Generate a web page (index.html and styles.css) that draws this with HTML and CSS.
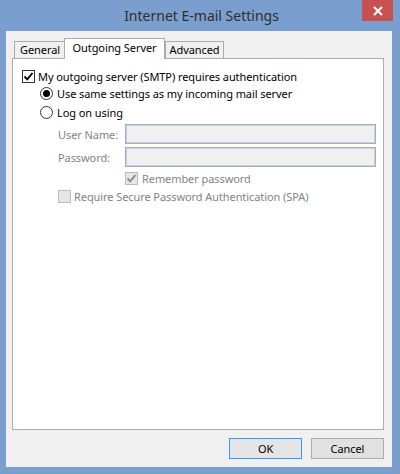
FILE: index.html
```html
<!DOCTYPE html>
<html>
<head>
<meta charset="utf-8">
<link rel="stylesheet" href="styles.css">
</head>
<body>
<div class="window">
  <div class="titlebar">
    <div class="title">Internet E-mail Settings</div>
    <div class="close">
      <svg width="10" height="10" viewBox="0 0 10 10"><path d="M1 1 L9 9 M9 1 L1 9" stroke="#fff" stroke-width="2" fill="none"/></svg>
    </div>
  </div>
  <div class="client">
    <div class="tabs">
      <div class="tab tab-general">General</div>
      <div class="tab tab-selected">Outgoing Server</div>
      <div class="tab tab-advanced">Advanced</div>
    </div>
    <div class="panel">
      <div class="row row-auth">
        <span class="cb"><svg width="11" height="11" viewBox="0 0 11 11"><path d="M1.5 5.5 L4.2 8.3 L9.5 2" stroke="#000" stroke-width="1.9" fill="none"/></svg></span>
        <span class="label">My outgoing server (SMTP) requires authentication</span>
      </div>
      <div class="row row-same">
        <span class="radio radio-on"><span class="dot"></span></span>
        <span class="label">Use same settings as my incoming mail server</span>
      </div>
      <div class="row row-logon">
        <span class="radio"></span>
        <span class="label">Log on using</span>
      </div>
      <div class="field field-user">
        <span class="field-label">User Name:</span>
        <span class="input"></span>
      </div>
      <div class="field field-pass">
        <span class="field-label">Password:</span>
        <span class="input"></span>
      </div>
      <div class="row row-remember">
        <span class="cb cb-disabled"><svg width="11" height="11" viewBox="0 0 11 11"><path d="M1.5 5.5 L4.2 8.3 L9.5 2" stroke="#8a8a8a" stroke-width="1.9" fill="none"/></svg></span>
        <span class="label label-disabled">Remember password</span>
      </div>
      <div class="row row-spa">
        <span class="cb cb-disabled"></span>
        <span class="label label-disabled">Require Secure Password Authentication (SPA)</span>
      </div>
    </div>
    <div class="buttons">
      <button class="btn btn-default">OK</button>
      <button class="btn">Cancel</button>
    </div>
  </div>
</div>
</body>
</html>
```
FILE: styles.css
```css
* { box-sizing: border-box; }
html, body {
  margin: 0;
  padding: 0;
}
body {
  width: 400px;
  height: 474px;
  background: #7a9fcf;
  font-family: "Noto Sans", "Open Sans", sans-serif;
  font-size: 11px;
  letter-spacing: -0.08px;
  color: #000;
  overflow: hidden;
}
.window {
  width: 400px;
  height: 474px;
  display: flex;
  flex-direction: column;
}
.titlebar {
  position: relative;
  height: 31px;
  display: flex;
  align-items: center;
  justify-content: center;
}
.title {
  font-size: 14px;
  letter-spacing: 0;
  color: #2e2e2e;
  margin-top: -1px;
  padding-left: 3px;
}
.close {
  position: absolute;
  top: 0;
  right: 7px;
  width: 31px;
  height: 21px;
  background: #c75050;
  display: flex;
  align-items: center;
  justify-content: center;
}
.close svg { display: block; }
.client {
  margin: 0 8px 0 6px;
  height: 436px;
  background: #f0f0f0;
  padding: 7px 8px 8px 6px;
  display: flex;
  flex-direction: column;
}
.tabs {
  position: relative;
  z-index: 1;
  display: flex;
  align-items: flex-end;
  height: 21px;
  margin-bottom: -1px;
  padding-left: 2px;
}
.tab {
  height: 17px;
  margin-bottom: 1px;
  border: 1px solid #acacac;
  border-bottom: none;
  background: #f0f0f0;
  display: flex;
  align-items: center;
  justify-content: center;
  line-height: 1;
  padding-bottom: 1px;
}
.tab-general { width: 52px; }
.tab-selected {
  width: 101px;
  height: 21px;
  margin-bottom: 0;
  margin-left: -2px;
  background: #fff;
  padding-bottom: 4px;
}
.tab-advanced { width: 59px; }
.panel {
  height: 372px;
  background: #fff;
  border: 1px solid #acacac;
  padding: 11px 0 0 9px;
  display: flex;
  flex-direction: column;
}
.row {
  display: flex;
  align-items: center;
  height: 13px;
  line-height: 1;
}
.row-same { margin-top: 4px; margin-left: 18px; }
.row-logon { margin-top: 6px; margin-left: 18px; }
.row-remember { margin-top: 5px; margin-left: 103px; }
.row-spa { margin-top: 5px; margin-left: 36px; }
.cb {
  width: 13px;
  height: 13px;
  border: 1px solid #333;
  background: #fff;
  display: flex;
  align-items: center;
  justify-content: center;
  flex: none;
}
.cb svg { display: block; }
.cb-disabled {
  border-color: #bcbcbc;
  background: #e6e6e6;
}
.radio {
  width: 13px;
  height: 13px;
  border: 1px solid #333;
  border-radius: 50%;
  background: #fff;
  display: flex;
  align-items: center;
  justify-content: center;
  flex: none;
}
.dot {
  width: 7px;
  height: 7px;
  border-radius: 50%;
  background: #000;
}
.label { margin-left: 4px; white-space: nowrap; }
.row-auth .label { margin-left: 3px; }
.row-spa .label { margin-left: 3px; }
.label-disabled { color: #838383; }
.field {
  display: flex;
  align-items: center;
  height: 20px;
  margin-left: 36px;
}
.field-user { margin-top: 5px; }
.field-pass { margin-top: 3px; }
.field-label {
  width: 67px;
  color: #838383;
  flex: none;
}
.input {
  width: 251px;
  height: 20px;
  border: 1px solid #acacac;
  box-shadow: inset 0 0 0 1px #bcd4f0;
  background: #f0f0f0;
}
.buttons {
  display: flex;
  justify-content: flex-end;
  gap: 9px;
  margin-top: 8px;
}
.btn {
  width: 73px;
  height: 21px;
  margin: 0;
  padding: 0;
  font-family: inherit;
  font-size: 11px;
  letter-spacing: -0.08px;
  color: #000;
  background: #e1e1e1;
  border: 1px solid #adadad;
  border-radius: 0;
  line-height: 1;
}
.btn-default {
  border-color: #3399ff;
  background: #e5e5e5;
}
```
